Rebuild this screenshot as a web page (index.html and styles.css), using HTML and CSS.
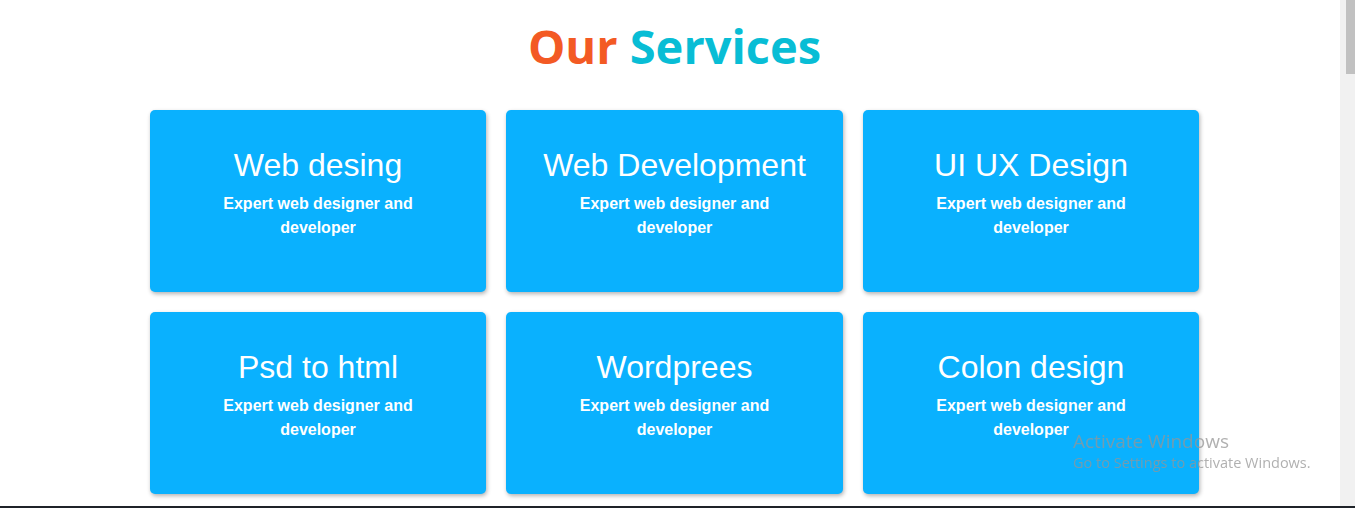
FILE: index.html
```html
<!DOCTYPE html>
<html lang="en">
<head>
<meta charset="utf-8">
<title>Our Services</title>
<link rel="stylesheet" href="styles.css">
</head>
<body>
<section class="services">
  <h1 class="heading"><span class="heading-a">Our</span> <span class="heading-b">Services</span></h1>
  <div class="grid">
    <div class="card"><h2 class="card-title">Web desing</h2><p class="card-text">Expert web designer and developer</p></div>
    <div class="card"><h2 class="card-title">Web Development</h2><p class="card-text">Expert web designer and developer</p></div>
    <div class="card"><h2 class="card-title">UI UX Design</h2><p class="card-text">Expert web designer and developer</p></div>
    <div class="card"><h2 class="card-title">Psd to html</h2><p class="card-text">Expert web designer and developer</p></div>
    <div class="card"><h2 class="card-title">Wordprees</h2><p class="card-text">Expert web designer and developer</p></div>
    <div class="card"><h2 class="card-title">Colon design</h2><p class="card-text">Expert web designer and developer</p></div>
  </div>
</section>
<div class="scrollbar"><div class="scrollbar-thumb"></div></div>
<div class="taskbar-edge"></div>
<div class="watermark">
  <div class="watermark-title">Activate Windows</div>
  <div class="watermark-sub">Go to Settings to activate Windows.</div>
</div>
</body>
</html>
```
FILE: styles.css
```css
html, body {
  margin: 0;
  padding: 0;
  height: 100%;
  overflow: hidden;
  background: #ffffff;
}
body {
  font-family: "Liberation Sans", Arial, sans-serif;
}
.services {
  width: 1049px;
  margin-left: 150px;
  padding-top: 11px;
}
.heading {
  margin: 0 0 29px;
  text-align: center;
  font-family: "Open Sans", "Noto Sans", sans-serif;
  font-weight: 700;
  font-size: 47px;
  line-height: 70px;
}
.heading-a { color: #f35a24; }
.heading-b { color: #08bdd5; }
.grid {
  display: grid;
  grid-template-columns: 336px 337px 336px;
  column-gap: 20px;
  row-gap: 20px;
}
.card {
  height: 182px;
  background: #0ab1fe;
  border-radius: 5px;
  box-shadow: 1px 2px 4px rgba(0, 0, 0, 0.3);
  color: #ffffff;
  text-align: center;
  padding: 36px 20px 0;
  box-sizing: border-box;
}
.card-title {
  margin: 0;
  font-weight: 400;
  font-size: 32px;
  line-height: 38px;
}
.card-text {
  margin: 8px auto 0;
  max-width: 220px;
  font-weight: 700;
  font-size: 16px;
  line-height: 24px;
}
.scrollbar {
  position: fixed;
  top: 0;
  right: 0;
  width: 15px;
  height: 100%;
  background: #f1f1f1;
}
.scrollbar-thumb {
  margin-left: 6px;
  width: 9px;
  height: 74px;
  background: #c1c1c1;
}
.taskbar-edge {
  position: fixed;
  left: 0;
  right: 0;
  bottom: 0;
  height: 2px;
  background: #1f2329;
}
.watermark {
  position: fixed;
  left: 1073px;
  top: 429px;
  color: rgba(150, 150, 150, 0.75);
  font-family: "Open Sans", "Noto Sans", sans-serif;
  pointer-events: none;
}
.watermark-title {
  font-size: 19px;
  line-height: 24px;
}
.watermark-sub {
  font-size: 14.5px;
  line-height: 20px;
  margin-top: 0;
}
```
